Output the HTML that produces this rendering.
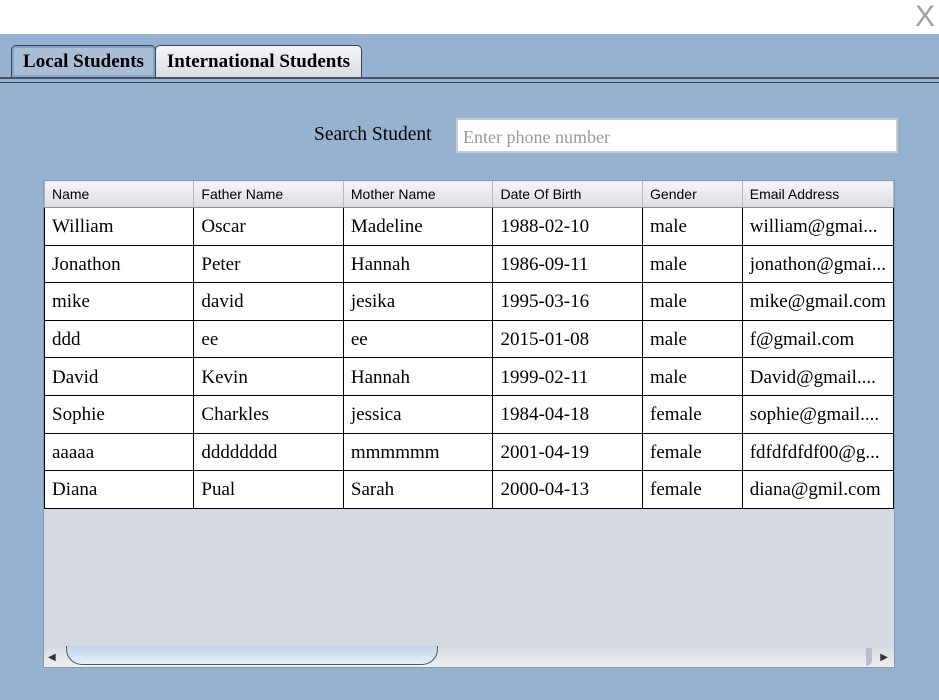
<!DOCTYPE html>
<html><head><style>
body{margin:0;width:939px;height:700px;background:#97b2d0;position:relative;overflow:hidden;font-family:"Liberation Serif",serif}
.top{position:absolute;left:0;top:0;width:939px;height:34px;background:#fff}
.x{position:absolute;right:4px;top:0px;font:30px "Liberation Sans",sans-serif;color:#a0a0a0}
.tab{position:absolute;top:45px;height:32px;border:1px solid #3c4250;border-bottom:none;border-radius:5px 5px 0 0;font-weight:bold;font-size:19px;line-height:32px;text-align:center;box-sizing:border-box}
.line1{position:absolute;left:0;top:77px;width:939px;height:2px;background:#4a5263}
.line2{position:absolute;left:0;top:82px;width:939px;height:1px;background:#3c4250}
.lbl{position:absolute;left:314px;top:124px;font-size:19.5px}
.inp{position:absolute;left:456px;top:118px;width:442px;height:35px;background:#fff;border:2px solid #c8ccd2;box-sizing:border-box;font-size:18px;color:#999;padding:7px 0 0 5px}
.tbl{position:absolute;left:43px;top:180px;width:852px;height:488px;background:#d5d9e2;border:1px solid #8a98aa;box-sizing:border-box;overflow:hidden}
table{border-collapse:collapse;position:absolute;left:0px;top:-1px;table-layout:fixed}
th{height:27px;box-sizing:border-box;background:linear-gradient(#f4f5f7,#dcdee4);border:1px solid #b4b8c0;border-bottom:1px solid #8a8e96;font:normal 14px "Liberation Sans",sans-serif;text-align:left;padding:0 7px}
td{height:37.6px;background:#fff;border:1px solid #000;font-size:19px;padding:2px 7px 0;white-space:nowrap;overflow:hidden;box-sizing:border-box}
.sb{position:absolute;left:0;bottom:0;width:850px;height:19px;background:linear-gradient(#d8dbe0,#eef0f2)}
.thumb{position:absolute;left:22px;top:-2px;width:370px;height:18px;border:1px solid #4c5a6c;border-top:none;border-radius:0 0 16px 16px;background:linear-gradient(#c0d4e8,#e6f0fa)}
</style></head><body>
<div class="top"><div class="x">X</div></div>
<div class="tab" style="left:11px;width:145px;background:#a9bdd3;box-shadow:inset 0 0 0 2px #7ea5d0">Local Students</div>
<div class="tab" style="left:155px;width:207px;background:linear-gradient(#f4f5f7,#dadde3)">International Students</div>
<div class="line1"></div><div class="line2"></div>
<div class="lbl">Search Student</div>
<div class="inp">Enter phone number</div>
<div class="tbl">
<table>
<colgroup><col style="width:150px"><col style="width:150px"><col style="width:150px"><col style="width:150px"><col style="width:100px"><col style="width:150px"></colgroup>
<tr><th>Name</th><th>Father Name</th><th>Mother Name</th><th>Date Of Birth</th><th>Gender</th><th>Email Address</th></tr>
<tr><td>William</td><td>Oscar</td><td>Madeline</td><td>1988-02-10</td><td>male</td><td>william@gmai...</td></tr>
<tr><td>Jonathon</td><td>Peter</td><td>Hannah</td><td>1986-09-11</td><td>male</td><td>jonathon@gmai...</td></tr>
<tr><td>mike</td><td>david</td><td>jesika</td><td>1995-03-16</td><td>male</td><td>mike@gmail.com</td></tr>
<tr><td>ddd</td><td>ee</td><td>ee</td><td>2015-01-08</td><td>male</td><td>f@gmail.com</td></tr>
<tr><td>David</td><td>Kevin</td><td>Hannah</td><td>1999-02-11</td><td>male</td><td>David@gmail....</td></tr>
<tr><td>Sophie</td><td>Charkles</td><td>jessica</td><td>1984-04-18</td><td>female</td><td>sophie@gmail....</td></tr>
<tr><td>aaaaa</td><td>dddddddd</td><td>mmmmmm</td><td>2001-04-19</td><td>female</td><td>fdfdfdfdf00@g...</td></tr>
<tr><td>Diana</td><td>Pual</td><td>Sarah</td><td>2000-04-13</td><td>female</td><td>diana@gmil.com</td></tr>
</table>
<div class="sb">
<div style="position:absolute;left:4px;top:4px;font-size:10px;color:#333">&#9664;</div>
<div class="thumb"></div>
<div style="position:absolute;left:822px;top:0;width:6px;height:18px;border-radius:0 0 6px 0;background:#b8c0cc"></div>
<div style="position:absolute;right:6px;top:4px;font-size:10px;color:#333">&#9654;</div>
</div>
</div>
</body></html>
